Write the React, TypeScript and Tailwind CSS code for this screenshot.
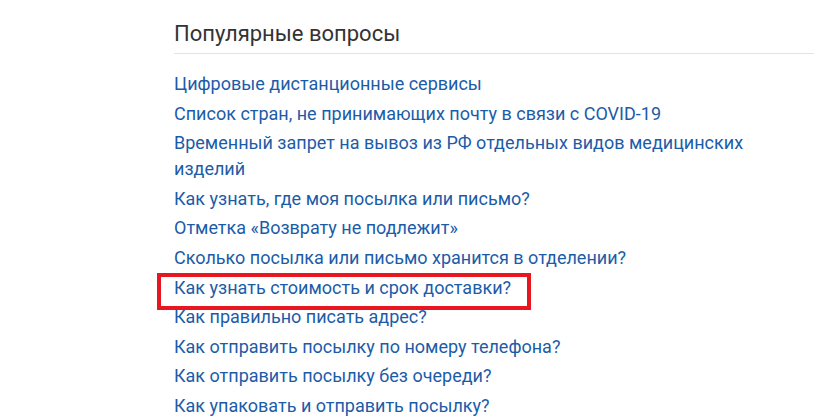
import React from "react";

const items = [
  "Цифровые дистанционные сервисы",
  "Список стран, не принимающих почту в связи с COVID-19",
  "Временный запрет на вывоз из РФ отдельных видов медицинских изделий",
  "Как узнать, где моя посылка или письмо?",
  "Отметка «Возврату не подлежит»",
  "Сколько посылка или письмо хранится в отделении?",
  "Как узнать стоимость и срок доставки?",
  "Как правильно писать адрес?",
  "Как отправить посылку по номеру телефона?",
  "Как отправить посылку без очереди?",
  "Как упаковать и отправить посылку?",
];

export default function App() {
  return (
    <div className="w-[838px] h-[418px] bg-white overflow-hidden" style={{ fontFamily: "Roboto, 'Noto Sans', sans-serif" }}>
      <div className="ml-[174px] w-[640px] pt-[20px]">
        <h2 className="text-[22px] leading-[28px] text-[#333333] font-normal pb-[5px] border-b border-[#e3e3e3]">
          Популярные вопросы
        </h2>
        <ul className="mt-[17px] flex flex-col gap-[3.6px] w-[600px]">
          {items.map((t, i) => (
            <li key={i} className="relative text-[18px] leading-[26px] text-[#1b5ca8]">
              <a href="#" className="hover:underline">{t}</a>
              {i === 6 && (
                <span className="absolute -left-[17px] -top-[2px] w-[374px] h-[37px] border-4 border-[#e8171f] pointer-events-none" />
              )}
            </li>
          ))}
        </ul>
      </div>
    </div>
  );
}
